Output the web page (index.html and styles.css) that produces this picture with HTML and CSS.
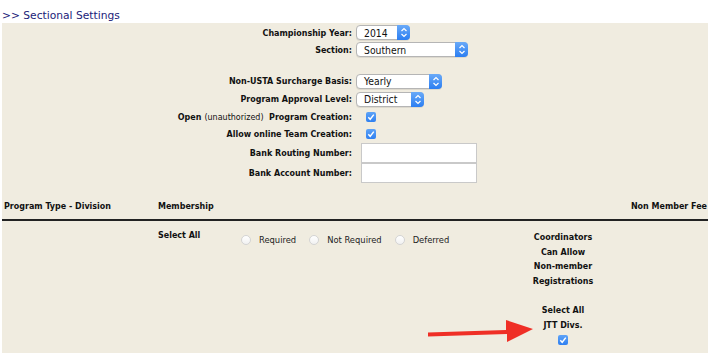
FILE: index.html
```html
<!DOCTYPE html>
<html>
<head>
  <title>Sectional Settings</title>
  <link rel="stylesheet" href="styles.css">
</head>
<body>
  <div class="title">&gt;&gt; Sectional Settings</div>
  <div class="panel">
    <div class="settings">
      <div class="lbl">Championship Year:</div>
      <div class="ctl"><span class="sel sel-year">2014<span class="arr"><svg width="8" height="11" viewBox="0 0 8 11"><path d="M1.5 4 L4 1.5 L6.5 4 M1.5 7 L4 9.5 L6.5 7" fill="none" stroke="#fff" stroke-width="1.2"/></svg></span></span></div>

      <div class="lbl">Section:</div>
      <div class="ctl"><span class="sel sel-section">Southern<span class="arr"><svg width="8" height="11" viewBox="0 0 8 11"><path d="M1.5 4 L4 1.5 L6.5 4 M1.5 7 L4 9.5 L6.5 7" fill="none" stroke="#fff" stroke-width="1.2"/></svg></span></span></div>

      <div class="gap-row"></div>

      <div class="lbl">Non-USTA Surcharge Basis:</div>
      <div class="ctl"><span class="sel sel-basis">Yearly<span class="arr"><svg width="8" height="11" viewBox="0 0 8 11"><path d="M1.5 4 L4 1.5 L6.5 4 M1.5 7 L4 9.5 L6.5 7" fill="none" stroke="#fff" stroke-width="1.2"/></svg></span></span></div>

      <div class="lbl">Program Approval Level:</div>
      <div class="ctl"><span class="sel sel-level">District<span class="arr"><svg width="8" height="11" viewBox="0 0 8 11"><path d="M1.5 4 L4 1.5 L6.5 4 M1.5 7 L4 9.5 L6.5 7" fill="none" stroke="#fff" stroke-width="1.2"/></svg></span></span></div>

      <div class="lbl">Open <span class="light">(unauthorized)</span>&nbsp; Program Creation:</div>
      <div class="ctl"><span class="check chk-indent"><svg width="10" height="10" viewBox="0 0 10 10"><path d="M2.3 5.2 L4.2 7.3 L7.8 2.6" fill="none" stroke="#fff" stroke-width="1.4"/></svg></span></div>

      <div class="lbl">Allow online Team Creation:</div>
      <div class="ctl"><span class="check chk-indent"><svg width="10" height="10" viewBox="0 0 10 10"><path d="M2.3 5.2 L4.2 7.3 L7.8 2.6" fill="none" stroke="#fff" stroke-width="1.4"/></svg></span></div>

      <div class="lbl tall">Bank Routing Number:</div>
      <div class="ctl tall"><span class="txt"></span></div>

      <div class="lbl tall">Bank Account Number:</div>
      <div class="ctl tall"><span class="txt"></span></div>
    </div>

    <div class="grid-head">
      <div>Program Type - Division</div>
      <div>Membership</div>
      <div class="fee">Non Member Fee</div>
    </div>

    <div class="grid-row">
      <div></div>
      <div class="b">Select All</div>
      <div class="radios">
        <span class="radio"></span><span class="rlabel">Required</span>
        <span class="radio"></span><span class="rlabel">Not Required</span>
        <span class="radio"></span><span class="rlabel">Deferred</span>
      </div>
      <div class="coord">
        <div>Coordinators</div>
        <div>Can Allow</div>
        <div>Non-member</div>
        <div>Registrations</div>
        <div class="sel-all">Select All</div>
        <div>JTT Divs.</div>
        <div><span class="check"><svg width="10" height="10" viewBox="0 0 10 10"><path d="M2.3 5.2 L4.2 7.3 L7.8 2.6" fill="none" stroke="#fff" stroke-width="1.4"/></svg></span></div>
      </div>
    </div>

    <svg class="red-arrow" width="110" height="30" viewBox="0 0 110 30">
      <polygon points="0,15.5 78,13 78,3 105,12 79,25 79,17 0,19.5" fill="#ef2f26"/>
    </svg>
  </div>
</body>
</html>
```

FILE: styles.css
```css
html, body {
  margin: 0;
  padding: 0;
  background: #fff;
}
body {
  font-family: "DejaVu Sans", Verdana, sans-serif;
  font-stretch: condensed;
  color: #111;
  height: 353px;
  overflow: hidden;
}
.title {
  font-size: 10.7px;
  font-stretch: normal;
  color: #1b1b78;
  padding: 9px 0 0 2px;
  height: 14px;
  line-height: 14px;
}
.panel {
  position: relative;
  margin-left: 2px;
  width: 706px;
  height: 330px;
  background: #f0ece0;
  padding-top: 1px;
  box-sizing: border-box;
}

/* settings form */
.settings {
  display: grid;
  grid-template-columns: 350px 1fr;
  column-gap: 4px;
  grid-template-rows: 17px 17px 14px 18px 18px 17px 18px 20px 20px;
}
.lbl {
  font-weight: bold;
  font-size: 8.9px;
  text-align: right;
  display: flex;
  align-items: center;
  justify-content: flex-end;
  white-space: nowrap;
}
.lbl .light {
  font-weight: normal;
  margin-left: 3px;
}
.ctl {
  display: flex;
  align-items: center;
}
.gap-row {
  grid-column: 1 / 3;
}
.sel {
  position: relative;
  display: inline-flex;
  align-items: center;
  height: 15px;
  box-sizing: border-box;
  border: 1px solid #b5b5b5;
  border-radius: 4px;
  background: #fff;
  font-size: 10.3px;
  padding-left: 7px;
  color: #111;
  box-shadow: 0 1px 0 rgba(0,0,0,0.08);
}
.sel .arr {
  position: absolute;
  right: -1px;
  top: -1px;
  bottom: -1px;
  width: 13px;
  border-radius: 0 4px 4px 0;
  background: linear-gradient(#6aaaf8, #2b7ef2);
  display: flex;
  align-items: center;
  justify-content: center;
}
.sel-year { width: 54px; }
.sel-section { width: 112px; }
.sel-basis { width: 86px; }
.sel-level { width: 68px; }

.check {
  display: inline-block;
  width: 10px;
  height: 10px;
  border-radius: 2px;
  background: linear-gradient(#5ea3f7, #2f80f1);
  line-height: 0;
}
.chk-indent {
  margin-left: 10px;
}
.txt {
  display: block;
  margin-left: 5px;
  width: 116px;
  height: 20px;
  box-sizing: border-box;
  background: #fff;
  border: 1px solid #c9c9c9;
}

/* divisions table */
.grid-head {
  display: grid;
  grid-template-columns: 154px 1fr 1fr;
  margin-top: 18px;
  padding: 0 1px 0 2px;
  height: 18px;
  border-bottom: 2px solid #222;
  font-weight: bold;
  font-size: 8.9px;
}
.grid-head .fee {
  text-align: right;
}
.grid-row {
  display: grid;
  grid-template-columns: 156px 83px 277px 90px 1fr;
  padding: 9px 0 0 0;
  font-size: 8.9px;
}
.b {
  font-weight: bold;
}
.radios {
  display: flex;
  align-items: center;
  height: 11px;
  margin-top: 4px;
  font-size: 9.3px;
  color: #222;
}
.radio {
  width: 10px;
  height: 10px;
  box-sizing: border-box;
  border-radius: 50%;
  border: 1px solid #d4d4d4;
  background: linear-gradient(#fff, #f1f1f1);
  margin-right: 8px;
}
.rlabel {
  margin-right: 13px;
}
.coord {
  font-weight: bold;
  text-align: center;
  line-height: 14.6px;
}
.coord .sel-all {
  margin-top: 15px;
}
.coord .check {
  vertical-align: middle;
}
.red-arrow {
  position: absolute;
  left: 426px;
  top: 294px;
}
```
